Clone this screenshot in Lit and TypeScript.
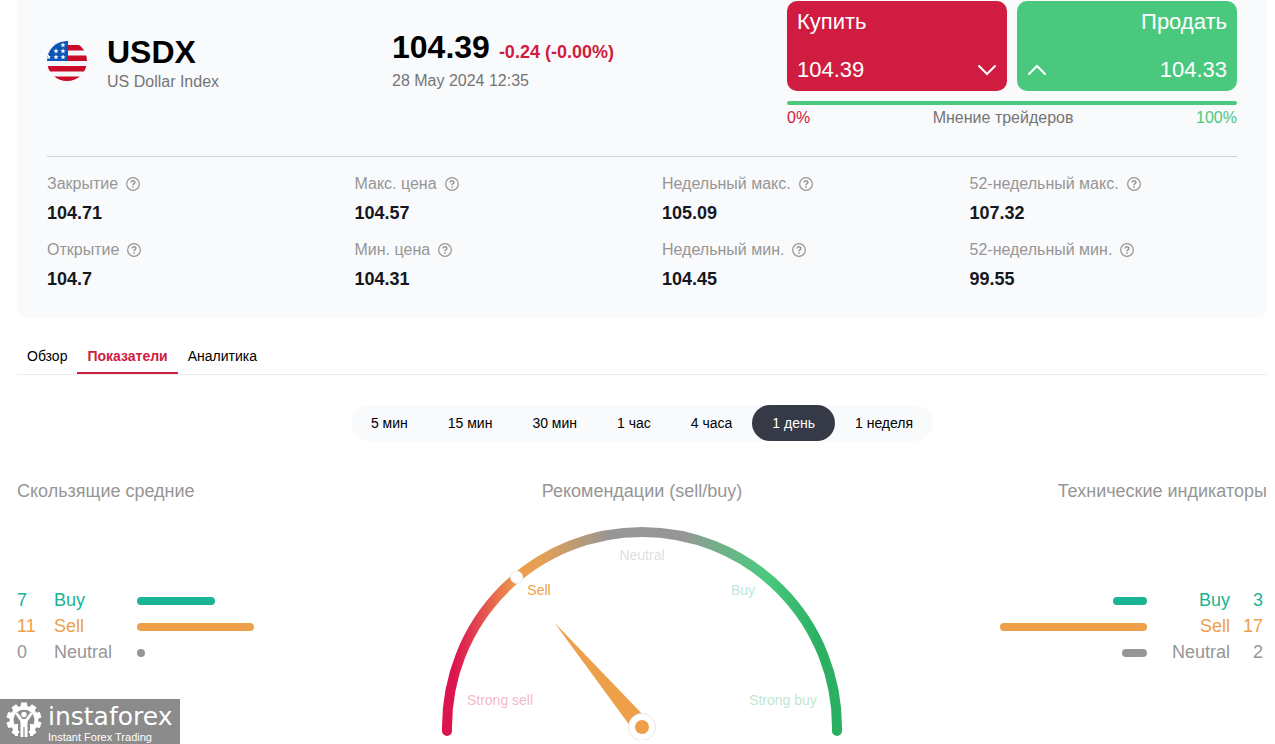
import { LitElement, html, svg, css } from "lit";
import { customElement, property, state } from "lit/decorators.js";
import { classMap } from "lit/directives/class-map.js";
import { styleMap } from "lit/directives/style-map.js";

type Tone = "buy" | "sell" | "neutral";

interface Signal {
  tone: Tone;
  label: string;
  count: number;
  width: number;
}

const STATS = [
  ["Закрытие", "104.71"],
  ["Макс. цена", "104.57"],
  ["Недельный макс.", "105.09"],
  ["52-недельный макс.", "107.32"],
  ["Открытие", "104.7"],
  ["Мин. цена", "104.31"],
  ["Недельный мин.", "104.45"],
  ["52-недельный мин.", "99.55"],
];

const TABS = ["Обзор", "Показатели", "Аналитика"];
const PERIODS = ["5 мин", "15 мин", "30 мин", "1 час", "4 часа", "1 день", "1 неделя"];

const AVERAGES: Signal[] = [
  { tone: "buy", label: "Buy", count: 7, width: 78 },
  { tone: "sell", label: "Sell", count: 11, width: 117 },
  { tone: "neutral", label: "Neutral", count: 0, width: 8 },
];

const INDICATORS: Signal[] = [
  { tone: "buy", label: "Buy", count: 3, width: 34 },
  { tone: "sell", label: "Sell", count: 17, width: 147 },
  { tone: "neutral", label: "Neutral", count: 2, width: 25 },
];

@customElement("signal-list")
class SignalList extends LitElement {
  @property({ attribute: false }) signals: Signal[] = [];
  @property({ type: Boolean }) mirrored = false;

  static styles = css`
    :host { display: block; }
    .list { list-style: none; margin: 0; padding: 0; }
    .row { display: flex; align-items: center; height: 26px; font-size: 18px; line-height: 26px; }
    .mirrored .row { flex-direction: row-reverse; text-align: right; }
    .count { box-sizing: border-box; width: 37px; }
    .mirrored .count { padding-right: 4px; }
    .label { width: 83px; }
    .bar { height: 8px; margin-top: 2px; border-radius: 4px; background: currentColor; }
    .buy { color: #1ab394; }
    .sell { color: #ed9f4a; }
    .neutral { color: #969696; }
  `;

  render() {
    return html`
      <ul class=${classMap({ list: true, mirrored: this.mirrored })}>
        ${this.signals.map(
          (s) => html`
            <li class="row ${s.tone}">
              <span class="count">${s.count}</span>
              <span class="label">${s.label}</span>
              <span class="bar" style=${styleMap({ width: `${s.width}px` })}></span>
            </li>
          `
        )}
      </ul>
    `;
  }
}

@customElement("trend-gauge")
class TrendGauge extends LitElement {
  static styles = css`
    :host { display: block; }
    .dial { display: block; width: 400px; height: 213px; }
    .mark { font: 14px "Liberation Sans", Arial, sans-serif; text-anchor: middle; }
  `;

  render() {
    return html`
      <svg class="dial" viewBox="0 0 400 213" role="img" aria-label="Sell">
        <defs>
          <linearGradient id="scale" gradientUnits="userSpaceOnUse" x1="0" y1="0" x2="400" y2="0">
            <stop offset="0.03" stop-color="#dc144f" />
            <stop offset="0.09" stop-color="#e24750" />
            <stop offset="0.19" stop-color="#ed9f4a" />
            <stop offset="0.25" stop-color="#e3a055" />
            <stop offset="0.42" stop-color="#969696" />
            <stop offset="0.6" stop-color="#969696" />
            <stop offset="0.68" stop-color="#78ad8b" />
            <stop offset="0.81" stop-color="#4ac97e" />
            <stop offset="0.94" stop-color="#2bb062" />
          </linearGradient>
        </defs>
        <path d="M5 204V200A195 195 0 0 1 395 200V204" fill="none" stroke="url(#scale)" stroke-width="10" stroke-linecap="round" />
        <circle cx="74.7" cy="50.3" r="6.2" fill="#fff" stroke="#e6e2e2" stroke-width="0.8" />
        ${svg`
          <text class="mark" x="58" y="178" fill="#f5b9ca">Strong sell</text>
          <text class="mark" x="97" y="68" fill="#ed9f4a">Sell</text>
          <text class="mark" x="200" y="33" fill="#dfdfdf">Neutral</text>
          <text class="mark" x="301" y="68" fill="#bae8db">Buy</text>
          <text class="mark" x="341" y="178" fill="#bfe7cf">Strong buy</text>
        `}
        <path d="M112.3 95.5L205 192L191 203Z" fill="#ed9f4a" />
        <circle cx="200" cy="200" r="13.5" fill="#fff" stroke="#e9e6e8" />
        <circle cx="200" cy="200" r="7" fill="#ed9f4a" />
      </svg>
    `;
  }
}

@customElement("app-root")
class AppRoot extends LitElement {
  @state() private tab = "Показатели";
  @state() private period = "1 день";

  static styles = css`
    :host {
      display: block;
      padding: 0 8px 0 17px;
      background: #fff;
      color: #000;
      font-family: "Liberation Sans", Arial, sans-serif;
    }
    h1, h2, p, dl, dd { margin: 0; }
    button { margin: 0; padding: 0; border: 0; background: none; color: inherit; font: inherit; cursor: pointer; }

    .card { padding: 1px 30px 27px; border-radius: 0 0 10px 10px; background: #f9fafc; }
    .head {
      display: grid;
      grid-template-columns: 345fr 395fr 450px;
      padding-bottom: 25px;
      border-bottom: 1px solid #ced3da;
    }
    .instrument { display: flex; gap: 20px; padding-top: 33px; }
    .flag { width: 40px; height: 40px; margin-top: 7px; }
    .symbol, .quote { font-size: 32px; line-height: 36px; font-weight: bold; }
    .sub { font-size: 16px; line-height: 24px; color: #757575; }
    .price { padding-top: 28px; }
    .price .sub { margin-top: 4px; }
    .quote { display: flex; align-items: baseline; gap: 9px; height: 36px; }
    .change { font-size: 18px; line-height: 24px; color: #cf1c40; }

    .deals { display: grid; grid-template-columns: 1fr 1fr; gap: 10px; }
    .deal {
      display: grid;
      grid-template-columns: 1fr auto;
      grid-template-rows: 42px 54px;
      align-items: center;
      height: 90px;
      padding: 0 10px;
      border-radius: 10px;
      color: #fff;
      font-size: 22px;
      text-align: left;
    }
    .deal-name { grid-column: 1 / -1; }
    .ask { background: #cf1c40; }
    .bid { grid-template-columns: auto 1fr; background: #4ac97e; text-align: right; }
    .chevron { width: 20px; height: 12px; }
    .opinion-bar { height: 4px; margin-top: 10px; border-radius: 2px; background: #4ac97e; }
    .opinion { display: flex; justify-content: space-between; font-size: 16px; line-height: 26px; color: #757575; }
    .low { color: #cf1c40; }
    .high { color: #4ac97e; }

    .stats { display: grid; grid-template-columns: repeat(4, 1fr); gap: 15px 40px; padding-top: 17px; }
    .stat-name { display: flex; align-items: center; gap: 8px; font-size: 16px; line-height: 20px; color: #969696; white-space: nowrap; }
    .help { width: 14px; height: 14px; }
    .stat-value { margin-top: 7px; font-size: 18px; line-height: 24px; font-weight: bold; color: #16181f; }

    .tabs { display: flex; margin-top: 20px; border-bottom: 1px solid #e9ecf1; font-size: 14px; line-height: 36px; }
    .tab { padding: 0 10px; }
    .tab.active { font-weight: bold; color: #cf1c40; box-shadow: inset 0 -2px #cf1c40; }

    .periods { display: flex; width: fit-content; margin: 30px auto 0; border-radius: 18px; background: #f9fafc; font-size: 14px; line-height: 36px; }
    .period { padding: 0 20px; border-radius: 18px; }
    .period.active { background: #363946; color: #fff; }

    .panels { display: grid; grid-template-columns: 1fr 400px 1fr; margin-top: 38px; }
    .title { font-size: 18px; line-height: 24px; font-weight: normal; color: #969696; }
    .panel.center .title { margin-bottom: 24px; text-align: center; }
    .panel.right .title { text-align: right; }
    .signals { margin-top: 84px; }

    .watermark {
      position: fixed;
      left: 0;
      bottom: 0;
      display: flex;
      gap: 6px;
      box-sizing: border-box;
      width: 180px;
      height: 45px;
      padding: 3px 0 0 6px;
      background: #8b8b8b;
      color: #fff;
    }
    .gear { width: 36px; height: 36px; }
    .brand { font: 25px/29px "DejaVu Sans", sans-serif; }
    .motto { font-size: 11px; line-height: 12px; }
  `;

  private flag() {
    const star = (x: number, y: number) =>
      svg`<path transform="translate(${x} ${y})" fill="#fff" d="M0-2.7L.7-.8 2.6-.8 1.1.4 1.6 2.3 0 1.2-1.6 2.3-1.1.4-2.6-.8-.7-.8Z" />`;
    return html`
      <svg class="flag" viewBox="0 0 40 40" aria-hidden="true">
        <defs>
          <clipPath id="round"><circle cx="20" cy="20" r="20" /></clipPath>
        </defs>
        <g clip-path="url(#round)">
          <rect width="40" height="40" fill="#f4f6fa" />
          <path fill="#cb0a28" d="M20 4h20v5.500H20zM20 14.500h20V20H20zM0 25h40v5.500H0zM0 35.500h40V40H0z" />
          <rect width="21" height="20" fill="#0d55b5" />
          ${[[16, 4], [9, 10], [16, 10], [1.5, 16], [9, 16], [16, 16]].map(([x, y]) => star(x, y))}
        </g>
      </svg>
    `;
  }

  private help() {
    return html`
      <svg class="help" viewBox="0 0 15 15" aria-hidden="true" fill="none" stroke="#969696">
        <circle cx="7.5" cy="7.5" r="6.8" stroke-width="1.3" />
        <path stroke-width="1.6" d="M5.500 6C5.500 3.400 9.500 3.400 9.500 5.800 9.500 7.200 7.500 7.200 7.500 8.900" />
        <path stroke-width="1.6" d="M7.500 10v1.500" />
      </svg>
    `;
  }

  private chevron(d: string) {
    return html`
      <svg class="chevron" viewBox="0 0 20 12" aria-hidden="true">
        <path d=${d} fill="none" stroke="#fff" stroke-width="2" stroke-linecap="round" />
      </svg>
    `;
  }

  private gear() {
    const teeth = [-144, -108, -72, -36, 0, 36, 72, 108, 144];
    return html`
      <svg class="gear" viewBox="-18 -18 36 36" aria-hidden="true">
        ${teeth.map((a) => svg`<path transform="rotate(${a})" fill="#fff" d="M-3.500-12L-2.800-17.500H2.800L3.500-12Z" />`)}
        <path fill="none" stroke="#fff" stroke-width="4" d="M-7.500 9.900A12.400 12.400 0 1 1 7.500 9.900" />
        <circle cy="-5.500" r="2.700" fill="#fff" />
        <path fill="#fff" d="M-8.500-6L-6.500-7.500L-1.500-1H1.500L6.500-7.500L8.500-6L3.500 1.500V17H.600V7H-.600V17H-3.500V1.500Z" />
        <path fill="#fff" d="M-9 4h3v12h-3zM6 4h3v12H6z" />
      </svg>
    `;
  }

  render() {
    return html`
      <section class="card">
        <header class="head">
          <div class="instrument">
            ${this.flag()}
            <div>
              <h1 class="symbol">USDX</h1>
              <p class="sub">US Dollar Index</p>
            </div>
          </div>
          <div class="price">
            <p class="quote">104.39 <span class="change">-0.24 (-0.00%)</span></p>
            <p class="sub">28 May 2024 12:35</p>
          </div>
          <div>
            <div class="deals">
              <button class="deal ask">
                <span class="deal-name">Купить</span>
                <span>104.39</span>
                ${this.chevron("M2 2L10 10L18 2")}
              </button>
              <button class="deal bid">
                <span class="deal-name">Продать</span>
                ${this.chevron("M2 10L10 2L18 10")}
                <span>104.33</span>
              </button>
            </div>
            <div class="opinion-bar"></div>
            <div class="opinion">
              <span class="low">0%</span>
              <span>Мнение трейдеров</span>
              <span class="high">100%</span>
            </div>
          </div>
        </header>
        <dl class="stats">
          ${STATS.map(
            ([name, value]) => html`
              <div>
                <dt class="stat-name">${name}${this.help()}</dt>
                <dd class="stat-value">${value}</dd>
              </div>
            `
          )}
        </dl>
      </section>

      <nav class="tabs" role="tablist">
        ${TABS.map(
          (t) => html`
            <button
              role="tab"
              aria-selected=${t === this.tab ? "true" : "false"}
              class=${classMap({ tab: true, active: t === this.tab })}
              @click=${() => (this.tab = t)}
            >${t}</button>
          `
        )}
      </nav>

      <div class="periods">
        ${PERIODS.map(
          (p) => html`
            <button
              aria-pressed=${p === this.period ? "true" : "false"}
              class=${classMap({ period: true, active: p === this.period })}
              @click=${() => (this.period = p)}
            >${p}</button>
          `
        )}
      </div>

      <main class="panels">
        <section class="panel">
          <h2 class="title">Скользящие средние</h2>
          <signal-list class="signals" .signals=${AVERAGES}></signal-list>
        </section>
        <section class="panel center">
          <h2 class="title">Рекомендации (sell/buy)</h2>
          <trend-gauge></trend-gauge>
        </section>
        <section class="panel right">
          <h2 class="title">Технические индикаторы</h2>
          <signal-list class="signals" mirrored .signals=${INDICATORS}></signal-list>
        </section>
      </main>

      <aside class="watermark">
        ${this.gear()}
        <div>
          <div class="brand">instaforex</div>
          <div class="motto">Instant Forex Trading</div>
        </div>
      </aside>
    `;
  }
}
